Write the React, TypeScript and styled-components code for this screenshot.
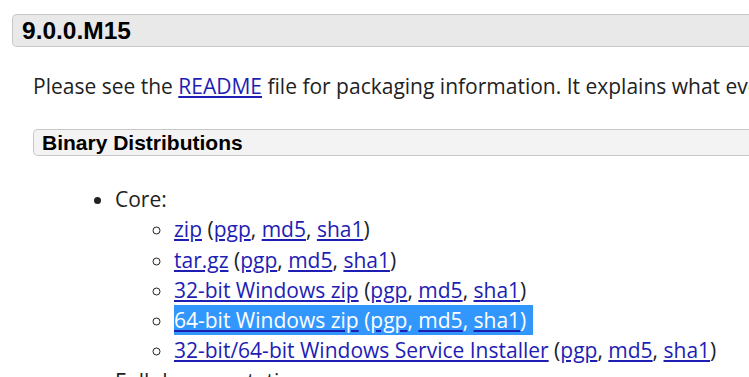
import styled, { createGlobalStyle } from "styled-components";

const GlobalStyle = createGlobalStyle`
  html, body {
    margin: 0;
    padding: 0;
    background: #fff;
    overflow: hidden;
  }
  body {
    font-family: "Open Sans", "Liberation Sans", sans-serif;
    font-size: 21px;
    color: #222;
  }
`;

const Page = styled.div`
  width: 1300px;
  padding: 14px 0 0 12px;
`;

const Section = styled.section``;

const Heading = styled.h3<{ $level: 1 | 2 }>`
  margin: 0;
  font-family: "Liberation Sans", Arial, sans-serif;
  font-weight: bold;
  color: #000;
  font-size: ${(p) => (p.$level === 1 ? "24.5px" : "21px")};
  line-height: ${(p) => (p.$level === 1 ? "29px" : "25px")};
  padding: ${(p) => (p.$level === 1 ? "1px 8px 1px 9px" : "0 8px 0 8px")};
  background: ${(p) => (p.$level === 1 ? "#e9e9e9" : "#f3f3f3")};
  border: 1px solid #c8c8c8;
  border-right: none;
  border-radius: 5px 0 0 5px;
`;

const Body = styled.div`
  padding-left: 21px;
`;

const Para = styled.p`
  margin: 24px 0 28px;
  line-height: 30px;
  white-space: nowrap;
`;

const Link = styled.a`
  color: #1e1eb4;
  text-decoration: underline;
`;

const List = styled.ul<{ $nested?: boolean }>`
  margin: ${(p) => (p.$nested ? "0" : "28px 0 0")};
  padding-left: ${(p) => (p.$nested ? "59px" : "82px")};
  list-style-type: ${(p) => (p.$nested ? "circle" : "disc")};
  line-height: 30.3px;
`;

const Item = styled.li``;

const Selected = styled.span`
  display: inline-block;
  height: 30px;
  background: #3297fd;
  color: #fff;
  padding-right: 7px;

  a {
    color: #fff;
    text-decoration-color: #1e1eb4;
  }
`;

type Dist = { name: string; selected?: boolean };

const core: Dist[] = [
  { name: "zip" },
  { name: "tar.gz" },
  { name: "32-bit Windows zip" },
  { name: "64-bit Windows zip", selected: true },
  { name: "32-bit/64-bit Windows Service Installer" },
];

const Sigs = () => (
  <>
    {" "}(<Link href="#">pgp</Link>, <Link href="#">md5</Link>,{" "}
    <Link href="#">sha1</Link>)
  </>
);

const renderDist = (d: Dist) => (
  <Item key={d.name}>
    {d.selected ? (
      <Selected>
        <Link href="#">{d.name}</Link>
        <Sigs />
      </Selected>
    ) : (
      <>
        <Link href="#">{d.name}</Link>
        <Sigs />
      </>
    )}
  </Item>
);

const App = () => (
  <Page>
    <GlobalStyle />
    <Section>
      <Heading $level={1}>9.0.0.M15</Heading>
      <Body>
        <Para>
          Please see the <Link href="#">README</Link> file for packaging
          information. It explains what every distribution contains.
        </Para>
        <Heading $level={2}>Binary Distributions</Heading>
        <List>
          <Item>
            Core:
            <List $nested>{core.map(renderDist)}</List>
          </Item>
          <Item>Full documentation:</Item>
        </List>
      </Body>
    </Section>
  </Page>
);

export default App;
